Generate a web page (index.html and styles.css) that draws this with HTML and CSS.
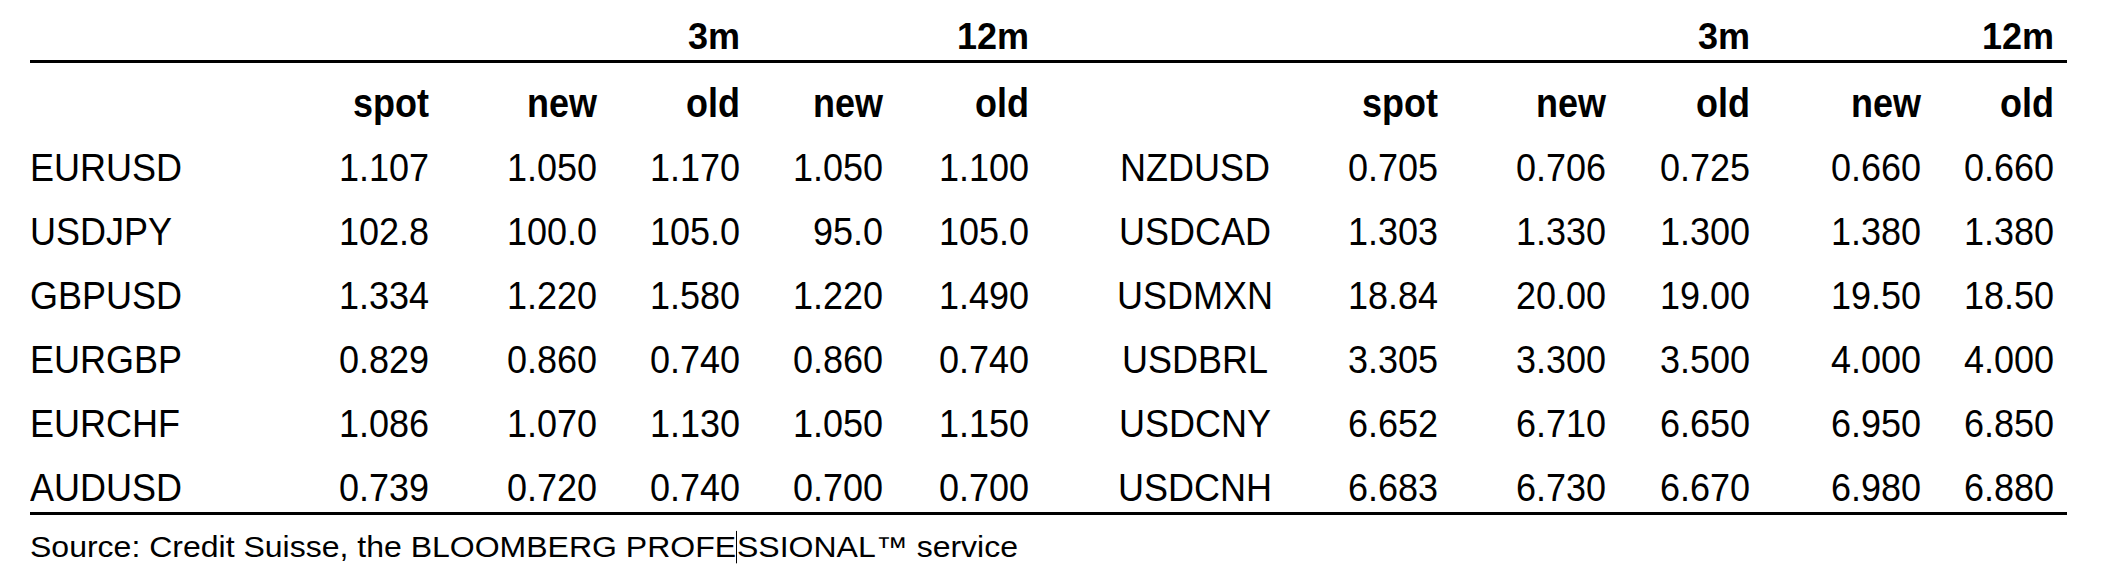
FILE: index.html
```html
<!DOCTYPE html>
<html lang="en">
<head>
<meta charset="utf-8">
<title>FX forecasts</title>
<link rel="stylesheet" href="styles.css">
</head>
<body>
<div class="page">
  <div class="grid top">
    <span></span><span></span><span></span><span class="num b">3m</span><span></span><span class="num b">12m</span>
    <span></span><span></span><span></span><span class="num b">3m</span><span></span><span class="num b">12m</span>
  </div>
  <div class="rule"></div>
  <div class="grid body">
    <span></span><span class="num b">spot</span><span class="num b">new</span><span class="num b">old</span><span class="num b">new</span><span class="num b">old</span>
    <span></span><span class="num b">spot</span><span class="num b">new</span><span class="num b">old</span><span class="num b">new</span><span class="num b">old</span>

    <span class="lab">EURUSD</span><span class="num">1.107</span><span class="num">1.050</span><span class="num">1.170</span><span class="num">1.050</span><span class="num">1.100</span>
    <span class="lab c">NZDUSD</span><span class="num">0.705</span><span class="num">0.706</span><span class="num">0.725</span><span class="num">0.660</span><span class="num">0.660</span>

    <span class="lab">USDJPY</span><span class="num">102.8</span><span class="num">100.0</span><span class="num">105.0</span><span class="num">95.0</span><span class="num">105.0</span>
    <span class="lab c">USDCAD</span><span class="num">1.303</span><span class="num">1.330</span><span class="num">1.300</span><span class="num">1.380</span><span class="num">1.380</span>

    <span class="lab">GBPUSD</span><span class="num">1.334</span><span class="num">1.220</span><span class="num">1.580</span><span class="num">1.220</span><span class="num">1.490</span>
    <span class="lab c">USDMXN</span><span class="num">18.84</span><span class="num">20.00</span><span class="num">19.00</span><span class="num">19.50</span><span class="num">18.50</span>

    <span class="lab">EURGBP</span><span class="num">0.829</span><span class="num">0.860</span><span class="num">0.740</span><span class="num">0.860</span><span class="num">0.740</span>
    <span class="lab c">USDBRL</span><span class="num">3.305</span><span class="num">3.300</span><span class="num">3.500</span><span class="num">4.000</span><span class="num">4.000</span>

    <span class="lab">EURCHF</span><span class="num">1.086</span><span class="num">1.070</span><span class="num">1.130</span><span class="num">1.050</span><span class="num">1.150</span>
    <span class="lab c">USDCNY</span><span class="num">6.652</span><span class="num">6.710</span><span class="num">6.650</span><span class="num">6.950</span><span class="num">6.850</span>

    <span class="lab">AUDUSD</span><span class="num">0.739</span><span class="num">0.720</span><span class="num">0.740</span><span class="num">0.700</span><span class="num">0.700</span>
    <span class="lab c">USDCNH</span><span class="num">6.683</span><span class="num">6.730</span><span class="num">6.670</span><span class="num">6.980</span><span class="num">6.880</span>
  </div>
  <div class="rule"></div>
  <p class="source">Source: Credit Suisse, the BLOOMBERG PROFE<span class="caret">SSIONAL™ service</span></p>
</div>
</body>
</html>
```

FILE: styles.css
```css
html, body {
  margin: 0;
  padding: 0;
  background: #ffffff;
}

body {
  font-family: "Liberation Sans", Arial, sans-serif;
  color: #000000;
}

.page {
  width: 2037px;
  padding: 14px 0 0 30px;
}

.grid {
  display: grid;
  grid-template-columns: 270px 129px 168px 143px 143px 146px 302px 107px 168px 144px 171px 133px;
  font-size: 36px;
}

.top {
  line-height: 46px;
  height: 46px;
}

.body {
  margin-top: 18px;
  row-gap: 17px;
  line-height: 47px;
}

.body > span {
  transform: scaleY(1.1);
  transform-origin: 50% 75%;
}

.body > span.b {
  transform: scaleY(1.15);
}

.rule {
  height: 3px;
  background: #000000;
}

.num {
  text-align: right;
  white-space: nowrap;
}

.b {
  font-weight: bold;
}

.lab {
  white-space: nowrap;
}

.lab.c {
  text-align: center;
  padding-left: 30px;
}

.source {
  margin: 13px 0 0 0;
  font-size: 32px;
  line-height: 37px;
  white-space: nowrap;
  transform: scaleY(0.9);
  transform-origin: 0 79%;
}

.caret {
  border-left: 1px solid #000000;
}
```
